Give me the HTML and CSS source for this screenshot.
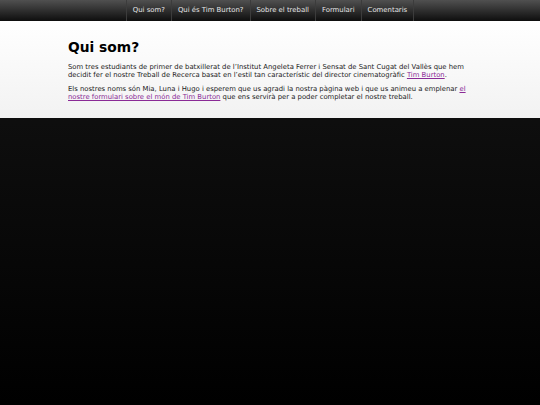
FILE: index.html
```html
<!DOCTYPE html>
<html lang="ca">
<head>
<meta charset="utf-8">
<title>Qui som?</title>
<link rel="stylesheet" href="styles.css">
</head>
<body>
<nav class="topnav">
  <ul class="menu">
    <li><a href="#">Qui som?</a></li>
    <li><a href="#">Qui és Tim Burton?</a></li>
    <li><a href="#">Sobre el treball</a></li>
    <li><a href="#">Formulari</a></li>
    <li><a href="#">Comentaris</a></li>
  </ul>
</nav>
<main class="content">
  <div class="wrap">
    <h1 class="title">Qui som?</h1>
    <p class="text">Som tres estudiants de primer de batxillerat de l’Institut Angeleta Ferrer i Sensat de Sant Cugat del Vallès que hem decidit fer el nostre Treball de Recerca basat en l’estil tan característic del director cinematogràfic <a class="link" href="#">Tim Burton</a>.</p>
    <p class="text">Els nostres noms són Mia, Luna i Hugo i esperem que us agradi la nostra pàgina web i que us animeu a emplenar <a class="link" href="#">el nostre formulari sobre el món de Tim Burton</a> que ens servirà per a poder completar el nostre treball.</p>
  </div>
</main>
<footer class="dark"></footer>
</body>
</html>
```
FILE: styles.css
```css
html, body {
  margin: 0;
  padding: 0;
  height: 100%;
}
body {
  font-family: "DejaVu Sans", Verdana, sans-serif;
  background: linear-gradient(#141414, #000);
  display: flex;
  flex-direction: column;
}
.topnav {
  height: 21px;
  background: linear-gradient(#505050, #0e0e0e);
  display: flex;
  justify-content: center;
}
.menu {
  list-style: none;
  margin: 0;
  padding: 0;
  display: flex;
  border-left: 1px solid #3c3c3c;
}
.menu li {
  border-right: 1px solid #3c3c3c;
  display: flex;
}
.menu a {
  color: #e6e6e6;
  text-decoration: none;
  font-size: 6.9px;
  line-height: 21px;
  padding: 0 6px;
}
.content {
  background: linear-gradient(#ffffff, #f2f2f2);
  height: 97px;
}
.wrap {
  width: 404px;
  margin: 0 auto;
  padding-top: 18px;
}
.title {
  margin: 0 0 7px;
  font-size: 13.8px;
  line-height: 17px;
  color: #000;
}
.text {
  margin: 0 0 6px;
  font-size: 6.85px;
  line-height: 8px;
  color: #222;
}
.link {
  color: #8a2a96;
}
.dark {
  flex: 1;
}
```
